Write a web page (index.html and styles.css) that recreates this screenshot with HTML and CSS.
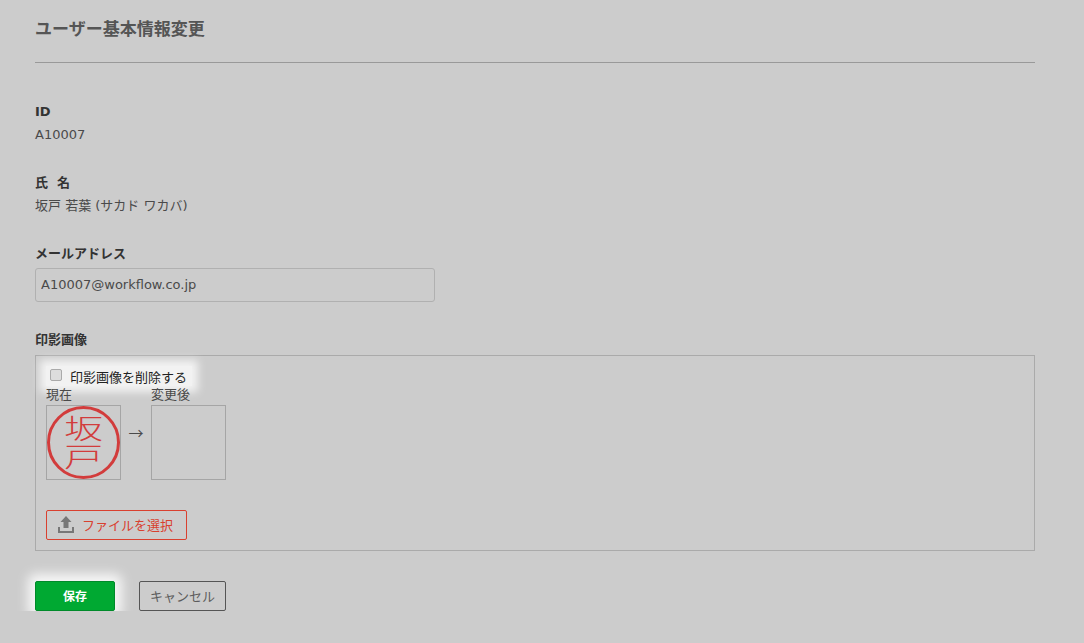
FILE: index.html
```html
<!DOCTYPE html>
<html lang="ja">
<head>
    <meta charset="UTF-8">
    <title>ユーザー基本情報変更</title>
    <link rel="stylesheet" href="styles.css">
</head>
<body>
    <div class="page">
        <h1 class="page-title">ユーザー基本情報変更</h1>

        <div class="field field-id">
            <div class="field-label">ID</div>
            <div class="field-value">A10007</div>
        </div>
        <div class="field">
            <div class="field-label">氏&nbsp;&nbsp;名</div>
            <div class="field-value">坂戸 若葉 (サカド ワカバ)</div>
        </div>
        <div class="field field-mail">
            <div class="field-label">メールアドレス</div>
            <input class="text-input" type="text" value="A10007@workflow.co.jp">
        </div>

        <div class="field-label">印影画像</div>
        <div class="stamp-box">
            <label class="delete-check">
                <input type="checkbox">
                <span>印影画像を削除する</span>
            </label>
            <div class="stamp-row">
                <div class="stamp-col">
                    <div class="stamp-caption">現在</div>
                    <div class="stamp-frame">
                        <div class="stamp">
                            <span>坂</span>
                            <span>戸</span>
                        </div>
                    </div>
                </div>
                <div class="stamp-arrow">→</div>
                <div class="stamp-col">
                    <div class="stamp-caption">変更後</div>
                    <div class="stamp-frame"></div>
                </div>
            </div>
            <button class="file-button" type="button">
                <svg width="20" height="20" viewBox="0 0 20 20">
                    <path d="M10 1 L15.5 7 H12.5 V13 H7.5 V7 H4.5 Z" fill="#777"/>
                    <path d="M2 12 V18 H18 V12 H16 V16 H4 V12 Z" fill="#777"/>
                </svg>
                <span>ファイルを選択</span>
            </button>
        </div>

        <div class="actions">
            <button class="btn-save" type="button">保存</button>
            <button class="btn-cancel" type="button">キャンセル</button>
        </div>
    </div>
</body>
</html>
```

FILE: styles.css
```css
* {
    box-sizing: border-box;
}

body {
    margin: 0;
    background-color: #cccccc;
    color: #4a4a4a;
    font-family: "DejaVu Sans", "Noto Sans CJK JP", sans-serif;
    font-size: 13px;
}

.page {
    width: 1000px;
    margin-left: 35px;
}

.page-title {
    margin: 0;
    height: 63px;
    padding-top: 17px;
    border-bottom: 1px solid #999;
    font-size: 17px;
    line-height: 24px;
    font-weight: bold;
    color: #555;
}

.field {
    height: 71px;
}

.field-id {
    margin-top: 39px;
}

.field-mail {
    height: 86px;
}

.field-label {
    height: 20px;
    font-size: 13px;
    line-height: 20px;
    font-weight: bold;
    color: #333;
}

.field-value {
    margin-top: 3px;
    line-height: 20px;
}

.text-input {
    display: block;
    width: 400px;
    height: 34px;
    margin-top: 4px;
    padding: 0 5px 2px;
    background: transparent;
    border: 1px solid #b0b0b0;
    border-radius: 3px;
    color: #4a4a4a;
    font-family: inherit;
    font-size: 13px;
}

.stamp-box {
    height: 196px;
    margin-top: 5px;
    padding: 0 10px;
    border: 1px solid #aaa;
}

.delete-check {
    display: flex;
    align-items: center;
    width: 146px;
    height: 20px;
    margin-top: 10px;
    margin-bottom: 1px;
    padding-left: 4px;
    background-color: rgba(255, 255, 255, 0.75);
    box-shadow: 0 0 8px 6px rgba(255, 255, 255, 0.75);
    color: #222;
}

.delete-check input {
    appearance: none;
    width: 12px;
    height: 12px;
    margin: -2px 8px 0 0;
    background-color: #ddd;
    border: 1px solid #aaa;
    border-radius: 2px;
}

.delete-check span {
    white-space: nowrap;
}

.stamp-row {
    display: flex;
}

.stamp-col {
    width: 75px;
}

.stamp-caption {
    height: 15px;
    line-height: 15px;
    white-space: nowrap;
}

.stamp-frame {
    width: 75px;
    height: 75px;
    margin-top: 3px;
    border: 1px solid #a5a5a5;
}

.stamp {
    display: flex;
    flex-direction: column;
    align-items: center;
    width: 73px;
    height: 73px;
    padding-top: 7px;
    border: 3px solid #d23c3c;
    border-radius: 50%;
    color: #d23c3c;
    font-size: 27px;
    font-weight: 300;
    line-height: 28px;
}

.stamp span {
    transform: scaleX(1.45);
}

.stamp-arrow {
    width: 30px;
    margin-top: 36px;
    font-family: "Noto Sans CJK JP", sans-serif;
    font-size: 15px;
    line-height: 20px;
    text-align: center;
}

.file-button {
    display: flex;
    align-items: center;
    gap: 6px;
    width: 141px;
    height: 30px;
    margin-top: 30px;
    padding: 0 0 1px 9px;
    background: transparent;
    border: 1px solid #d9402f;
    border-radius: 2px;
    color: #d9402f;
    font-family: inherit;
    font-size: 13px;
}

.actions {
    display: flex;
    gap: 24px;
    margin-top: 30px;
}

.btn-save {
    width: 80px;
    height: 30px;
    padding-bottom: 3px;
    background-color: #00a932;
    border: 1px solid #008a2a;
    border-radius: 2px;
    box-shadow: 0 0 12px 7px rgba(255, 255, 255, 0.85);
    color: #fff;
    font-family: inherit;
    font-size: 12px;
    font-weight: bold;
}

.btn-cancel {
    width: 87px;
    height: 30px;
    padding-bottom: 3px;
    background: transparent;
    border: 1px solid #555;
    border-radius: 2px;
    color: #5c5c5c;
    font-family: inherit;
    font-size: 13px;
}
```
